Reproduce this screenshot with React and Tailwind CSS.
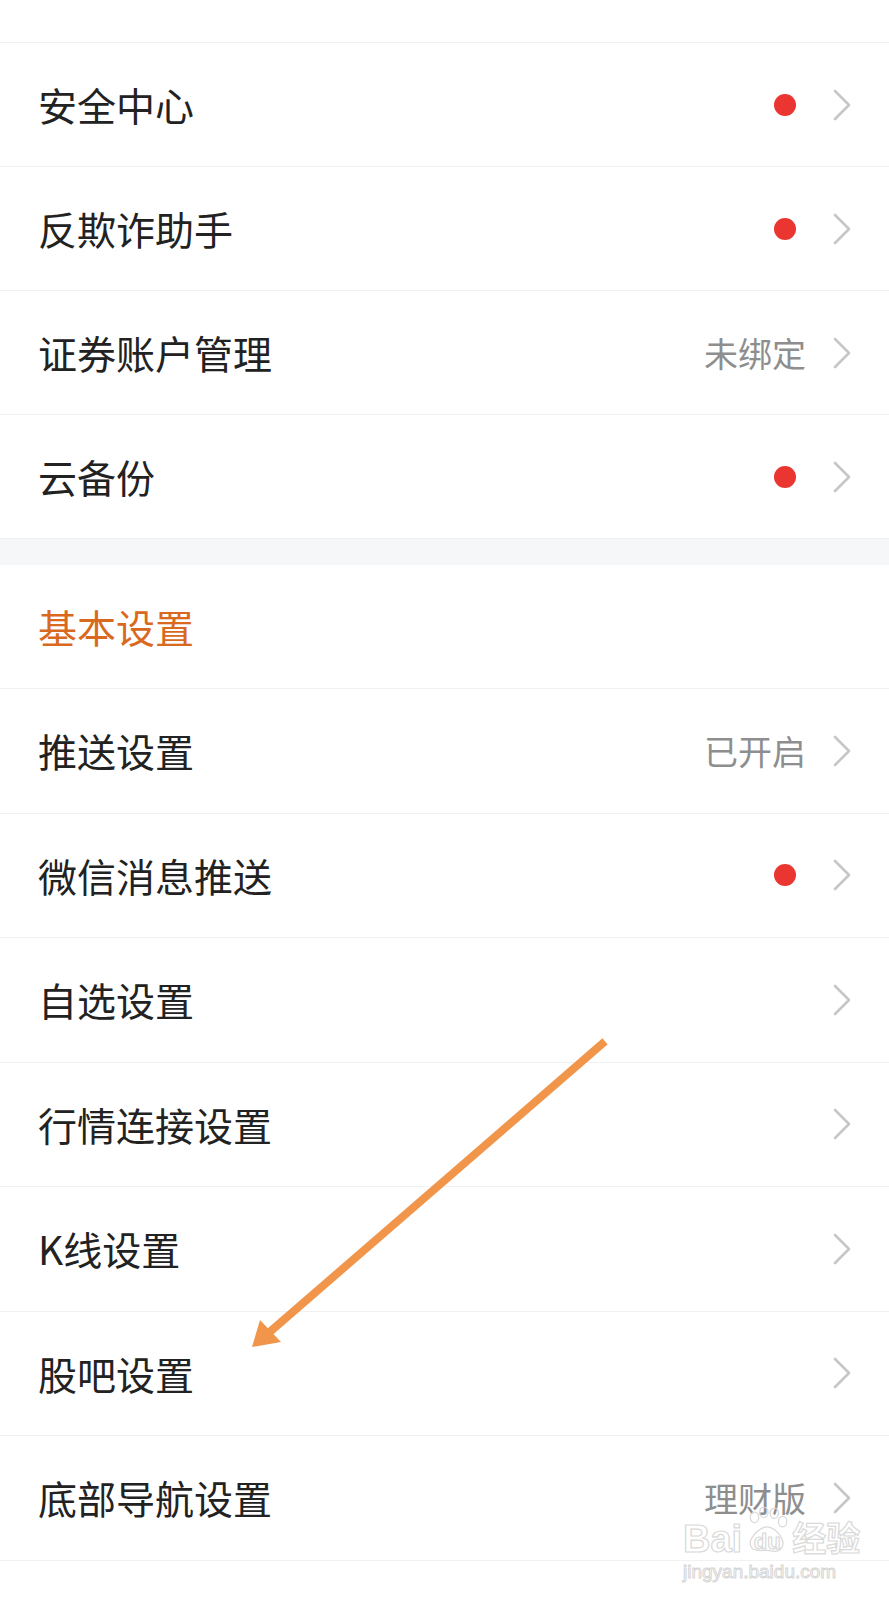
import React from 'react';

const font = { fontFamily: '"Noto Sans CJK SC", "Noto Sans", sans-serif' };

const topItems = [
    { label: '安全中心', dot: true },
    { label: '反欺诈助手', dot: true },
    { label: '证券账户管理', value: '未绑定' },
    { label: '云备份', dot: true },
];

const basicItems = [
    { label: '推送设置', value: '已开启' },
    { label: '微信消息推送', dot: true },
    { label: '自选设置' },
    { label: '行情连接设置' },
    { label: 'K线设置' },
    { label: '股吧设置' },
    { label: '底部导航设置', value: '理财版' },
];

const Chevron = () => (
    <svg width="20" height="32" viewBox="0 0 20 32" className="ml-[26px] shrink-0">
        <path d="M3 2 L17 16 L3 30" fill="none" stroke="#c6c6c6" strokeWidth="2.6" strokeLinecap="round" strokeLinejoin="round" />
    </svg>
);

const Row = ({ item, tall }) => (
    <div className={`flex items-center border-b border-[#f1f1f1] pl-[38px] pr-[37px] ${tall ? 'h-[124.5px]' : 'h-[124px]'}`}>
        <span className="flex-1 text-[39px] leading-none text-[#222222]">{item.label}</span>
        {item.dot && <span className="mr-[10px] w-[22px] h-[22px] rounded-full bg-[#ea3530]" />}
        {item.value && <span className="text-[34px] leading-none text-[#8e8e8e]">{item.value}</span>}
        <Chevron />
    </div>
);

const App = () => {
    return (
        <div className="relative w-[889px] h-[1600px] bg-white overflow-hidden" style={font}>
            {/* top spacer */}
            <div className="h-[43px] border-b border-[#f1f1f1]" />

            {topItems.map((item) => (
                <Row key={item.label} item={item} />
            ))}

            {/* section gap */}
            <div className="h-[26px] bg-[#f6f7f9]" />

            {/* 基本设置 */}
            <div className="flex items-center h-[124px] border-b border-[#f1f1f1] pl-[38px]">
                <span className="text-[39px] leading-none text-[#d9691e]">基本设置</span>
            </div>

            {basicItems.map((item) => (
                <Row key={item.label} item={item} tall />
            ))}

            {/* annotation arrow */}
            <svg className="absolute left-0 top-0 pointer-events-none" width="889" height="1600">
                <line x1="602" y1="1044" x2="272" y2="1330" stroke="#f0954a" strokeWidth="8" strokeLinecap="square" />
                <polygon points="252,1347 260,1320 281,1342" fill="#f0954a" />
            </svg>

            {/* watermark */}
            <div className="absolute left-[683px] top-[1519px] flex flex-col items-start pointer-events-none" style={{ fontFamily: '"Liberation Sans", "Noto Sans CJK SC", sans-serif' }}>
                <div className="flex items-center text-[38px] leading-none font-bold text-white [-webkit-text-stroke:1.2px_#d9d9d9]">
                    <span>Bai</span>
                    <span className="relative mx-[2px] flex items-center justify-center w-[46px] h-[40px]">
                        <svg width="46" height="48" viewBox="0 0 44 46" className="absolute -top-[12px] left-0">
                            <ellipse cx="10" cy="10" rx="4" ry="5" fill="none" stroke="#d9d9d9" strokeWidth="1.2" />
                            <ellipse cx="19" cy="5" rx="4" ry="5" fill="none" stroke="#d9d9d9" strokeWidth="1.2" />
                            <ellipse cx="29" cy="6" rx="4" ry="5" fill="none" stroke="#d9d9d9" strokeWidth="1.2" />
                            <ellipse cx="37" cy="14" rx="4" ry="5" fill="none" stroke="#d9d9d9" strokeWidth="1.2" />
                            <path d="M8 40 C2 34 10 24 18 20 C24 17 32 22 36 30 C40 38 34 44 26 42 C20 40 16 44 8 40 Z" fill="white" stroke="#d9d9d9" strokeWidth="1.2" />
                        </svg>
                        <span className="relative text-[22px] mt-[6px]">du</span>
                    </span>
                    <span className="text-[34px]">经验</span>
                </div>
                <div className="mt-[3px] text-[19px] leading-none text-white [-webkit-text-stroke:1px_#d6d6d6]">jingyan.baidu.com</div>
            </div>
        </div>
    );
};

export default App;
